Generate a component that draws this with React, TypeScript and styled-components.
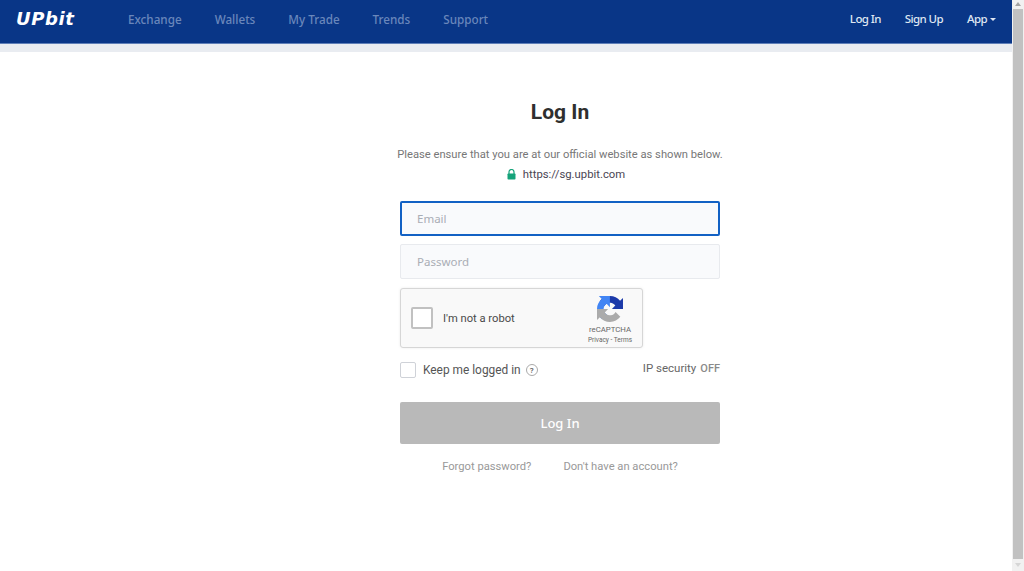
import React from 'react';
import styled, { createGlobalStyle } from 'styled-components';

const GlobalStyle = createGlobalStyle`
    html, body {
        margin: 0;
        padding: 0;
        height: 100%;
        overflow: hidden;
        background: #fff;
    }
    body {
        font-family: Roboto, "Liberation Sans", sans-serif;
    }
`;

const Page = styled.div`
    display: flex;
    width: 1024px;
    height: 571px;
    overflow: hidden;
`;

const Main = styled.div`
    flex: 1;
    min-width: 0;
    display: flex;
    flex-direction: column;
`;

const Header = styled.header`
    height: 43px;
    background-color: #093687;
    border-bottom: 1px solid #5f7fb8;
    display: flex;
    align-items: flex-start;
    line-height: 38px;
    font-family: "Noto Sans", sans-serif;
    font-weight: 500;
    font-size: 11.7px;
`;

const Logo = styled.div`
    width: 128px;
    padding-left: 16px;
    box-sizing: border-box;
    color: #fff;
    font-family: "DejaVu Sans", sans-serif;
    font-style: italic;
    font-weight: 700;
    font-size: 18px;
    letter-spacing: 0.6px;
`;

const NavList = styled.nav`
    display: flex;
    gap: 33px;
    flex: 1;
`;

const NavLink = styled.a`
    color: #6a87bb;
`;

const UserMenu = styled.div`
    display: flex;
    gap: 24px;
    padding-right: 16px;
    color: #dfe6f2;
    font-size: 11.5px;
    letter-spacing: -0.6px;
`;

const Caret = styled.span`
    display: inline-block;
    margin-left: 3px;
    vertical-align: 2px;
    border-left: 3px solid transparent;
    border-right: 3px solid transparent;
    border-top: 3px solid #dfe6f2;
`;

const Band = styled.div`
    height: 8px;
    background-color: #e9ecf1;
`;

const Content = styled.main`
    width: 330px;
    margin-left: 395px;
    padding-top: 47px;
    display: flex;
    flex-direction: column;
    align-items: center;
`;

const Title = styled.h1`
    margin: 0;
    font-size: 21px;
    line-height: 26px;
    font-weight: 700;
    color: #2f2f2f;
`;

const Notice = styled.p`
    margin: 22px 0 0;
    white-space: nowrap;
    font-size: 11.2px;
    line-height: 16px;
    color: #777;
`;

const SiteUrl = styled.div`
    margin-top: 3px;
    padding-left: 12px;
    display: flex;
    align-items: center;
    gap: 7px;
    height: 17px;
    font-size: 11.3px;
    color: #4a4553;
`;

const Form = styled.form`
    width: 320px;
    margin-top: 18px;
    display: flex;
    flex-direction: column;
`;

const Field = styled.div<{ $focused?: boolean }>`
    height: 35px;
    box-sizing: border-box;
    display: flex;
    align-items: center;
    padding-left: ${(p) => (p.$focused ? '15px' : '16px')};
    margin-bottom: 8px;
    background-color: #f9fafc;
    border-radius: 2px;
    border: ${(p) => (p.$focused ? '2px solid #1261c4' : '1px solid #e8eaee')};
    font-family: "Noto Sans", sans-serif;
    font-size: 11.5px;
    color: #a9adb5;
`;

const Captcha = styled.div`
    width: 243px;
    height: 60px;
    margin-top: 1px;
    box-sizing: border-box;
    display: flex;
    align-items: center;
    background-color: #f9f9f9;
    border: 1px solid #d6d6d6;
    border-radius: 3px;
    box-shadow: 0 0 3px rgba(0, 0, 0, 0.08);
`;

const CaptchaBox = styled.div`
    width: 22px;
    height: 22px;
    margin-left: 10px;
    box-sizing: border-box;
    background: #fff;
    border: 2px solid #c1c1c1;
    border-radius: 2px;
`;

const CaptchaLabel = styled.span`
    margin-left: 10px;
    flex: 1;
    font-size: 11.2px;
    color: #4a4a4a;
`;

const CaptchaBrand = styled.div`
    width: 60px;
    margin-right: 2px;
    margin-top: 4px;
    display: flex;
    flex-direction: column;
    align-items: center;
    color: #666;
`;

const BrandName = styled.span`
    font-size: 7.8px;
    line-height: 10px;
    margin-top: 3px;
`;

const BrandLinks = styled.span`
    font-size: 6.5px;
    line-height: 10px;
`;

const OptionRow = styled.div`
    margin-top: 12px;
    height: 18px;
    display: flex;
    align-items: center;
    justify-content: space-between;
`;

const KeepLogin = styled.div`
    margin-top: 2px;
    display: flex;
    align-items: center;
    font-size: 11.9px;
    color: #555;
`;

const CheckBox = styled.span`
    width: 16px;
    height: 16px;
    margin-right: 7px;
    box-sizing: border-box;
    background: #fff;
    border: 1px solid #cfd2d8;
    border-radius: 2px;
`;

const HelpMark = styled.span`
    width: 12px;
    height: 12px;
    margin-left: 5px;
    box-sizing: border-box;
    display: flex;
    align-items: center;
    justify-content: center;
    border: 1px solid #aaa;
    border-radius: 50%;
    font-size: 8px;
    font-weight: 500;
    color: #555;
`;

const IpSecurity = styled.div`
    display: flex;
    align-items: baseline;
    gap: 4px;
    margin-top: -3px;
    font-size: 11.5px;
    color: #666;
`;

const OffLabel = styled.span`
    font-weight: 500;
    font-size: 11px;
    color: #8a8a8a;
`;

const SubmitButton = styled.button`
    margin-top: 24px;
    height: 42px;
    border: 0;
    border-radius: 2px;
    background-color: #b9b9b9;
    color: #fff;
    font-family: "Noto Sans", sans-serif;
    font-weight: 500;
    font-size: 13px;
`;

const LinkRow = styled.div`
    margin-top: 15px;
    display: flex;
    justify-content: center;
    gap: 32px;
    font-size: 11.2px;
    line-height: 16px;
    color: #999;
`;

const Scrollbar = styled.aside`
    width: 12px;
    display: flex;
    flex-direction: column;
    align-items: center;
    background-color: #f1f1f1;
`;

const ScrollArrow = styled.span<{ $down?: boolean }>`
    flex: none;
    height: 0;
    border-left: 3px solid transparent;
    border-right: 3px solid transparent;
    ${(p) => (p.$down
        ? 'border-top: 4px solid #d6d6d6; margin: 4px 0;'
        : 'border-bottom: 4px solid #a3a3a3; margin: 2px 0 3px;')}
`;

const ScrollThumb = styled.div`
    flex: 1;
    width: 10px;
    background-color: #c1c1c1;
`;

const LockIcon = () => (
    <svg width="9" height="11" viewBox="0 0 9 11">
        <path d="M2 5V3a2.5 2.5 0 0 1 5 0v2" fill="none" stroke="#15a37a" strokeWidth="1.2" />
        <rect x="0.5" y="4.5" width="8" height="6" rx="0.8" fill="#15a37a" />
    </svg>
);

const RecaptchaIcon = () => (
    <svg width="26" height="26" viewBox="0 0 64 64">
        <path d="M64 31.955l-.033-1.37V4.687l-7.16 7.16C50.948 4.674 42.033.093 32.05.093c-10.4 0-19.622 4.96-25.458 12.64l11.736 11.86a15.55 15.55 0 0 1 4.754-5.334c2.05-1.6 4.952-2.906 8.968-2.906.485 0 .86.057 1.135.163 4.976.393 9.288 3.14 11.828 7.124l-8.307 8.307c10.522-.04 22.41-.066 27.295.006" fill="#1c3aa9" />
        <path d="M31.862.094l-1.37.033H4.594l7.16 7.16C4.58 13.147 0 22.06 0 32.046c0 10.4 4.96 19.622 12.64 25.458l11.86-11.736a15.55 15.55 0 0 1-5.334-4.754c-1.6-2.05-2.906-4.952-2.906-8.968 0-.485.057-.86.163-1.135.393-4.976 3.14-9.288 7.124-11.828l8.307 8.307c-.04-10.522-.066-22.41.006-27.295" fill="#4285f4" />
        <path d="M.001 32.045l.033 1.37v25.898l7.16-7.16c5.86 7.173 14.774 11.754 24.76 11.754 10.4 0 19.622-4.96 25.458-12.64l-11.736-11.86a15.55 15.55 0 0 1-4.754 5.334c-2.05 1.6-4.952 2.906-8.968 2.906-.485 0-.86-.057-1.135-.163-4.976-.393-9.288-3.14-11.828-7.124l8.307-8.307c-10.522.04-22.41.066-27.295-.006" fill="#ababab" />
    </svg>
);

const navItems = ['Exchange', 'Wallets', 'My Trade', 'Trends', 'Support'];

const App = () => {
    return (
        <Page>
            <GlobalStyle />
            <Main>
                <Header>
                    <Logo>UPbit</Logo>
                    <NavList>
                        {navItems.map((item) => (
                            <NavLink key={item}>{item}</NavLink>
                        ))}
                    </NavList>
                    <UserMenu>
                        <span>Log In</span>
                        <span>Sign Up</span>
                        <span>App<Caret /></span>
                    </UserMenu>
                </Header>
                <Band />
                <Content>
                    <Title>Log In</Title>
                    <Notice>Please ensure that you are at our official website as shown below.</Notice>
                    <SiteUrl>
                        <LockIcon />
                        https://sg.upbit.com
                    </SiteUrl>
                    <Form>
                        <Field $focused>Email</Field>
                        <Field>Password</Field>
                        <Captcha>
                            <CaptchaBox />
                            <CaptchaLabel>I'm not a robot</CaptchaLabel>
                            <CaptchaBrand>
                                <RecaptchaIcon />
                                <BrandName>reCAPTCHA</BrandName>
                                <BrandLinks>Privacy - Terms</BrandLinks>
                            </CaptchaBrand>
                        </Captcha>
                        <OptionRow>
                            <KeepLogin>
                                <CheckBox />
                                Keep me logged in
                                <HelpMark>?</HelpMark>
                            </KeepLogin>
                            <IpSecurity>
                                IP security <OffLabel>OFF</OffLabel>
                            </IpSecurity>
                        </OptionRow>
                        <SubmitButton type="button">Log In</SubmitButton>
                        <LinkRow>
                            <span>Forgot password?</span>
                            <span>Don't have an account?</span>
                        </LinkRow>
                    </Form>
                </Content>
            </Main>
            <Scrollbar>
                <ScrollArrow />
                <ScrollThumb />
                <ScrollArrow $down />
            </Scrollbar>
        </Page>
    );
};

export default App;
